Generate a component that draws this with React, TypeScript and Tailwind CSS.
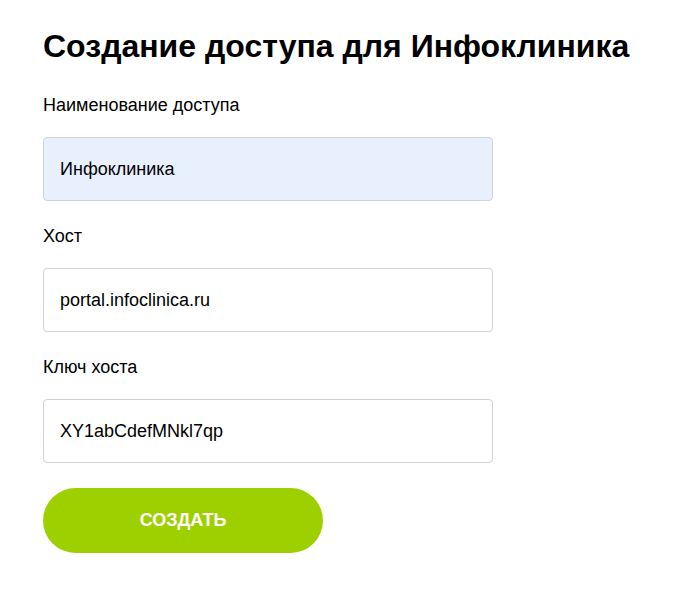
const fields = [
  { label: 'Наименование доступа', value: 'Инфоклиника', filled: true },
  { label: 'Хост', value: 'portal.infoclinica.ru', filled: false },
  { label: 'Ключ хоста', value: 'XY1abCdefMNkl7qp', filled: false },
];

const App = () => {
  return (
    <div className="min-h-screen bg-white px-[43px] pt-[28px] font-['Liberation_Sans',Arial,sans-serif] text-black">
      <h1 className="text-[32px] leading-[36px] font-bold">{'Создание доступа для Инфоклиника'}</h1>
      <form className="mt-[31px] flex w-[450px] flex-col" onSubmit={(e) => e.preventDefault()}>
        {fields.map((f) => (
          <div key={f.label} className="mb-[25px] flex flex-col">
            <label className="text-[18px] leading-[20px]">{f.label}</label>
            <input
              readOnly
              value={f.value}
              className={`mt-[22px] h-[64px] rounded-[4px] border border-[#cfd2d6] px-[16px] text-[18px] text-black outline-none ${
                f.filled ? 'bg-[#e8f0fe]' : 'bg-white'
              }`}
            />
          </div>
        ))}
        <button
          type="submit"
          className="h-[65px] w-[280px] rounded-full bg-[#9ed000] text-[18px] font-bold uppercase text-white"
        >
          {'Создать'}
        </button>
      </form>
    </div>
  );
};

export default App;
